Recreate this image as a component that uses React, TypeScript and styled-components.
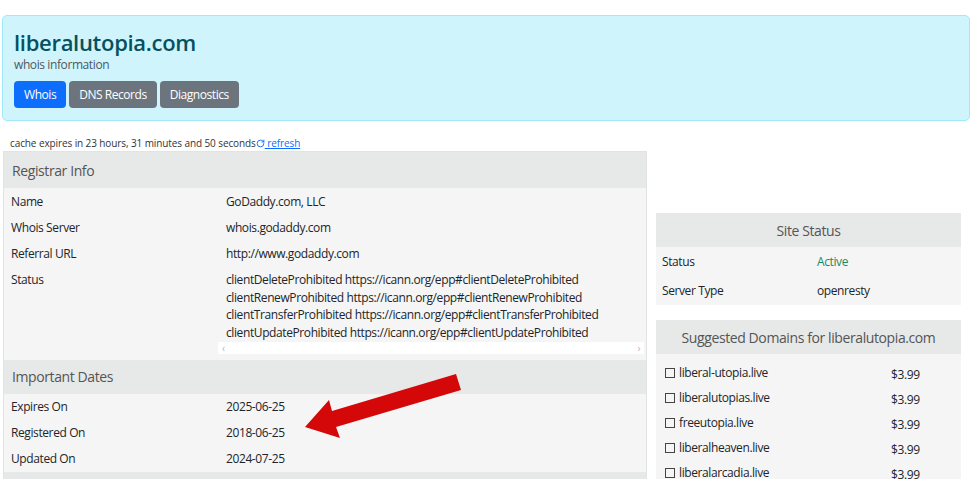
import React from 'react'
import styled, { createGlobalStyle } from 'styled-components'
import { RotateCw } from 'lucide-react'

const GlobalStyle = createGlobalStyle`
  html, body {
    margin: 0;
    padding: 0;
    background: #ffffff;
  }
  body {
    font-family: 'Open Sans', 'Noto Sans', sans-serif;
    color: #212529;
    letter-spacing: -0.4px;
  }
`

const Page = styled.div`
  width: 974px;
  padding: 15px 0 0 2px;
  box-sizing: border-box;
`

const Banner = styled.div`
  width: 968px;
  height: 106px;
  box-sizing: border-box;
  background: #cff4fc;
  border: 1px solid #9eeaf9;
  border-radius: 5px;
  padding: 12px 11px 0;

  .domain_title {
    margin: 0;
    font-size: 22px;
    font-weight: 600;
    line-height: 28px;
    color: #055160;
    letter-spacing: -0.3px;
  }
  .domain_sub {
    margin-top: 2px;
    font-size: 12px;
    line-height: 14px;
    color: #50595e;
  }
`

const TabBar = styled.div`
  display: flex;
  gap: 3px;
  margin-top: 9px;
`

const TabButton = styled.button<{ $active?: boolean }>`
  height: 27px;
  padding: 0 10px;
  border: none;
  border-radius: 4px;
  font-family: inherit;
  font-size: 12px;
  letter-spacing: -0.45px;
  color: #ffffff;
  background: ${({ $active }) => ($active ? '#0d6efd' : '#6c757d')};
`

const CacheLine = styled.div`
  margin: 16px 0 2px 8px;
  font-size: 10px;
  line-height: 12px;
  color: #333;
  letter-spacing: -0.1px;
  display: flex;
  align-items: center;

  a {
    color: #0d6efd;
    text-decoration: underline;
    display: inline-flex;
    align-items: center;
  }
`

const Columns = styled.div`
  display: grid;
  grid-template-columns: 644px 305px;
  column-gap: 9px;
  padding-left: 1px;
`

const MainPanel = styled.div`
  position: relative;
  background: #f5f5f5;
  border: 1px solid #e2e3e3;
  border-bottom: none;
`

const PanelHeader = styled.div<{ $center?: boolean; $h?: number }>`
  height: ${({ $h }) => $h ?? 35}px;
  display: flex;
  align-items: center;
  justify-content: ${({ $center }) => ($center ? 'center' : 'flex-start')};
  padding: 0 8px;
  background: #e7e8e8;
  font-size: 14px;
  color: #555555;
`

const InfoRow = styled.div<{ $labelW: number; $h: number }>`
  display: grid;
  grid-template-columns: ${({ $labelW }) => $labelW}px 1fr;
  min-height: ${({ $h }) => $h}px;
  align-items: center;
  font-size: 12px;

  .row_label {
    padding-left: 7px;
  }
  .row_value {
    padding-left: 8px;
  }
`

const StatusLabel = styled.div`
  align-self: start;
  padding: 5px 0 0 7px;
`

const StatusCell = styled.div`
  align-self: start;
  padding-top: 5px;
  padding-bottom: 6px;

  .status_lines {
    padding-left: 8px;
    font-size: 12px;
    line-height: 17.7px;
    white-space: nowrap;
  }
`

const ScrollStrip = styled.div`
  height: 12px;
  margin-right: 2px;
  background: #ffffff;
  display: flex;
  align-items: center;
  justify-content: space-between;
  padding: 0 4px;
  font-size: 10px;
  color: #b5b5b5;
`

const SideColumn = styled.div`
  padding-top: 62px;
  display: flex;
  flex-direction: column;
  gap: 15px;
`

const SidePanel = styled.div`
  background: #f5f5f5;
`

const SideRow = styled(InfoRow)`
  .row_label,
  .row_value {
    padding-left: 6px;
  }
`

const DomainList = styled.div`
  padding: 6px 0 0;
`

const DomainRow = styled.div`
  display: grid;
  grid-template-columns: 235px 1fr;
  height: 25px;
  align-items: center;
  font-size: 12px;

  .domain_name {
    padding-left: 9px;
    display: flex;
    align-items: center;
    gap: 4px;
  }
  .box {
    width: 10px;
    height: 10px;
    border: 1px solid #444;
    box-sizing: border-box;
  }
  .price {
    padding-top: 3px;
  }
`

const ActiveText = styled.span`
  color: #1a8a5e;
`

const Arrow = styled.svg`
  position: absolute;
  left: -4px;
  top: -152px;
  pointer-events: none;
`

const registrar = [
  ['Name', 'GoDaddy.com, LLC'],
  ['Whois Server', 'whois.godaddy.com'],
  ['Referral URL', 'http://www.godaddy.com'],
]

const statuses = ['Delete', 'Renew', 'Transfer', 'Update']

const dates = [
  ['Expires On', '2025-06-25'],
  ['Registered On', '2018-06-25'],
  ['Updated On', '2024-07-25'],
]

const suggestions = [
  'liberal-utopia.live',
  'liberalutopias.live',
  'freeutopia.live',
  'liberalheaven.live',
  'liberalarcadia.live',
]

function App() {
  return (
    <Page>
      <GlobalStyle />
      <Banner>
        <h1 className="domain_title">liberalutopia.com</h1>
        <div className="domain_sub">whois information</div>
        <TabBar>
          <TabButton $active>Whois</TabButton>
          <TabButton>DNS Records</TabButton>
          <TabButton>Diagnostics</TabButton>
        </TabBar>
      </Banner>

      <CacheLine>
        cache expires in 23 hours, 31 minutes and 50 seconds
        <a>
          <RotateCw size={9} strokeWidth={2.5} />
          &nbsp;refresh
        </a>
      </CacheLine>

      <Columns>
        <MainPanel>
          <PanelHeader $h={36}>Registrar Info</PanelHeader>
          {registrar.map(([label, value]) => (
            <InfoRow key={label} $labelW={214} $h={26}>
              <div className="row_label">{label}</div>
              <div className="row_value">{value}</div>
            </InfoRow>
          ))}
          <InfoRow $labelW={214} $h={26}>
            <StatusLabel>Status</StatusLabel>
            <StatusCell>
              <div className="status_lines">
                {statuses.map((s) => (
                  <div key={s}>
                    {`client${s}Prohibited https://icann.org/epp#client${s}Prohibited`}
                  </div>
                ))}
              </div>
              <ScrollStrip>
                <span>&lsaquo;</span>
                <span>&rsaquo;</span>
              </ScrollStrip>
            </StatusCell>
          </InfoRow>
          <PanelHeader $h={34}>Important Dates</PanelHeader>
          {dates.map(([label, value]) => (
            <InfoRow key={label} $labelW={214} $h={26}>
              <div className="row_label">{label}</div>
              <div className="row_value">{value}</div>
            </InfoRow>
          ))}
          <PanelHeader $h={20} />
          <Arrow width="480" height="480" viewBox="0 0 480 480">
            <polygon
              points="456,374 461,390 336,427 340,438 305,427 329,400 332,411"
              fill="#d40808"
            />
          </Arrow>
        </MainPanel>

        <SideColumn>
          <SidePanel>
            <PanelHeader $center $h={34}>Site Status</PanelHeader>
            <SideRow $labelW={155} $h={29}>
              <div className="row_label">Status</div>
              <div className="row_value">
                <ActiveText>Active</ActiveText>
              </div>
            </SideRow>
            <SideRow $labelW={155} $h={29}>
              <div className="row_label">Server Type</div>
              <div className="row_value">openresty</div>
            </SideRow>
          </SidePanel>

          <SidePanel>
            <PanelHeader $center $h={34}>Suggested Domains for liberalutopia.com</PanelHeader>
            <DomainList>
              {suggestions.map((d) => (
                <DomainRow key={d}>
                  <div className="domain_name">
                    <span className="box" />
                    {d}
                  </div>
                  <div className="price">$3.99</div>
                </DomainRow>
              ))}
            </DomainList>
          </SidePanel>
        </SideColumn>
      </Columns>
    </Page>
  )
}

export default App
